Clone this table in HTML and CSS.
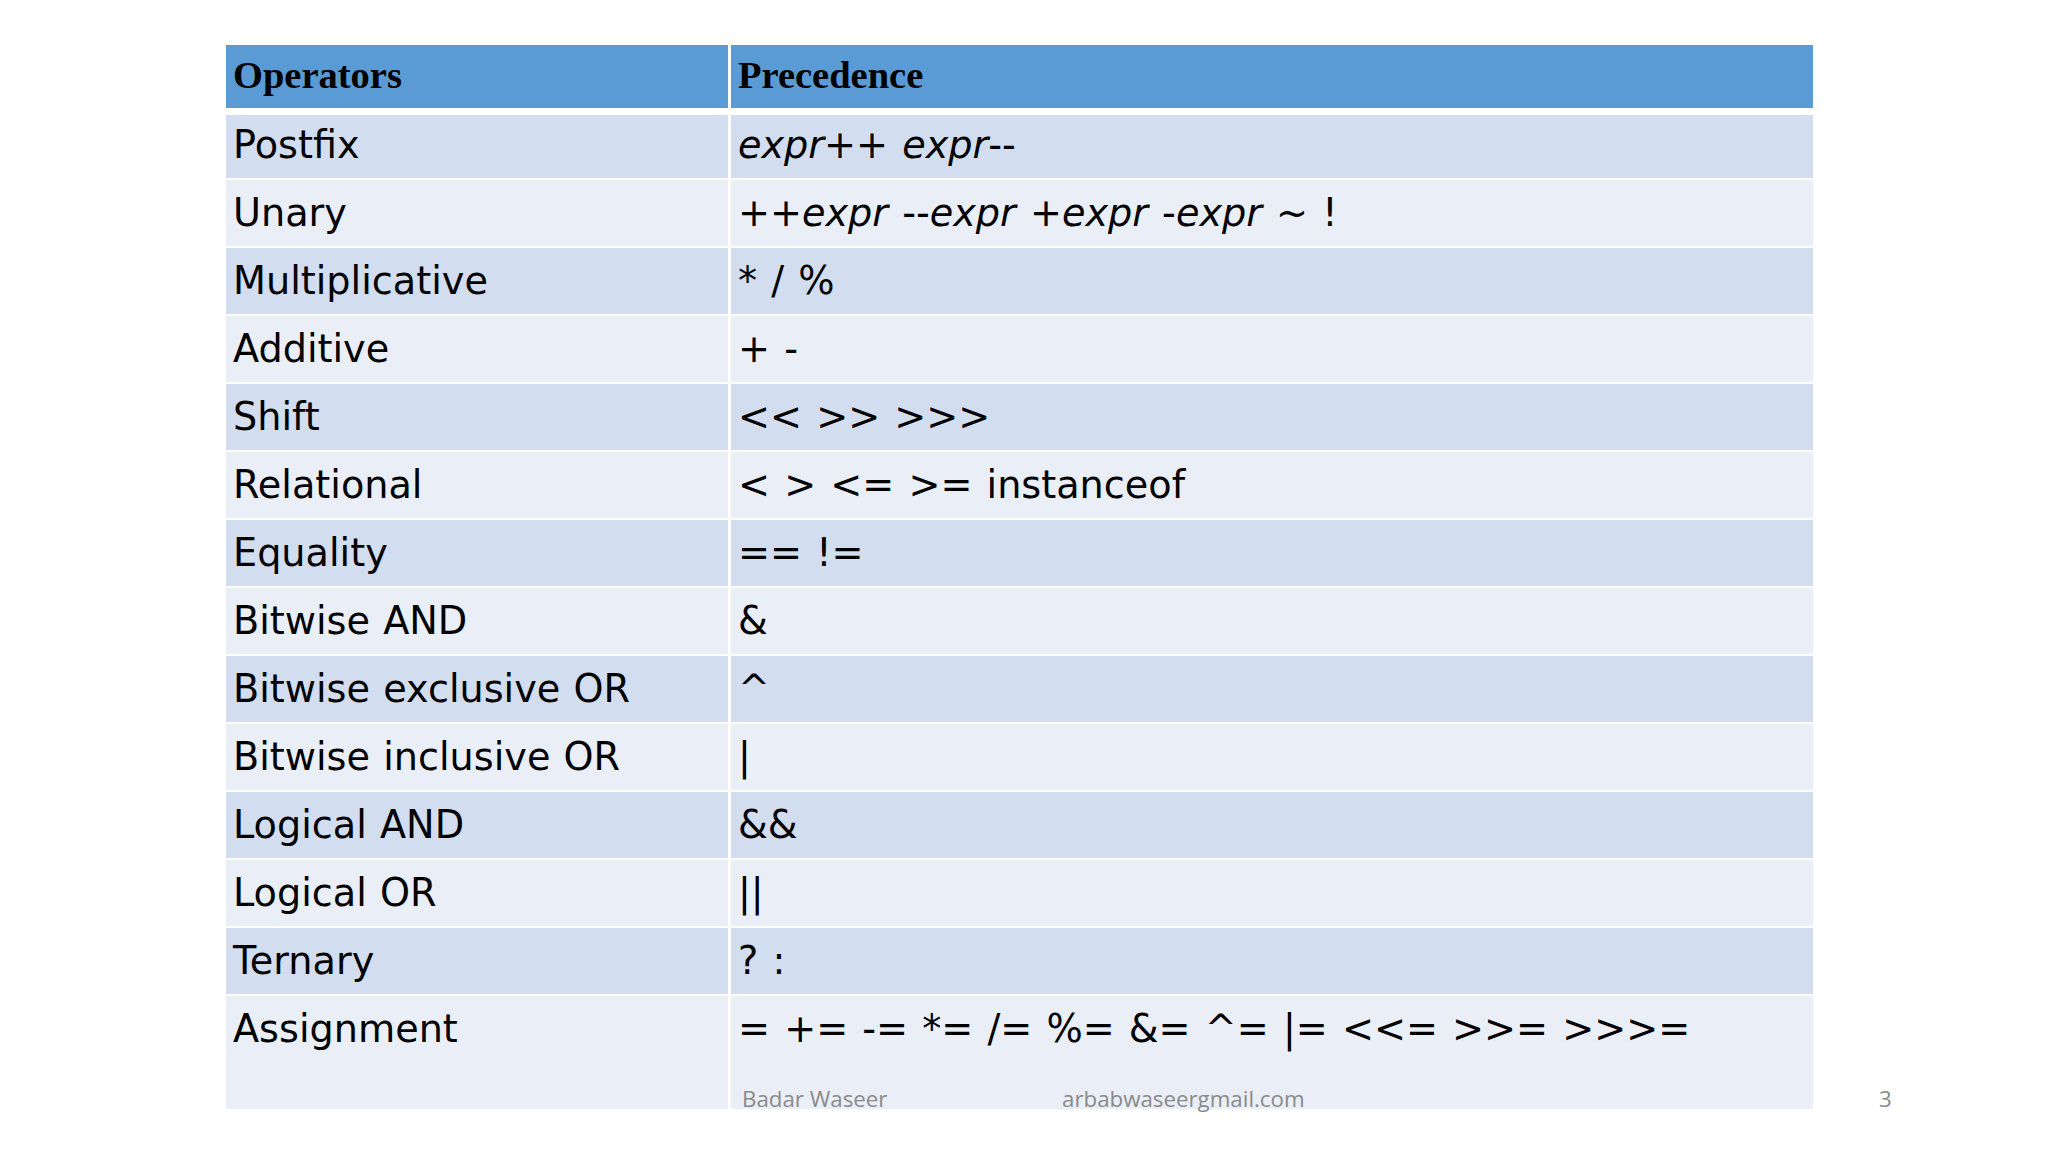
FILE: index.html
```html
<!DOCTYPE html>
<html>
<head>
<meta charset="utf-8">
<link rel="stylesheet" href="styles.css">
</head>
<body>
<div class="slide">
  <div class="table">
    <div class="row head">
      <div class="cell">Operators</div>
      <div class="cell">Precedence</div>
    </div>
    <div class="row dark first">
      <div class="cell">Postfix</div>
      <div class="cell op"><i>expr</i>++ <i>expr</i>--</div>
    </div>
    <div class="row light">
      <div class="cell">Unary</div>
      <div class="cell op">++<i>expr</i> --<i>expr</i> +<i>expr</i> -<i>expr</i> ~ !</div>
    </div>
    <div class="row dark">
      <div class="cell">Multiplicative</div>
      <div class="cell op">* / %</div>
    </div>
    <div class="row light">
      <div class="cell">Additive</div>
      <div class="cell op">+ -</div>
    </div>
    <div class="row dark">
      <div class="cell">Shift</div>
      <div class="cell op">&lt;&lt; &gt;&gt; &gt;&gt;&gt;</div>
    </div>
    <div class="row light">
      <div class="cell">Relational</div>
      <div class="cell op">&lt; &gt; &lt;= &gt;= instanceof</div>
    </div>
    <div class="row dark">
      <div class="cell">Equality</div>
      <div class="cell op">== !=</div>
    </div>
    <div class="row light">
      <div class="cell">Bitwise AND</div>
      <div class="cell op">&amp;</div>
    </div>
    <div class="row dark">
      <div class="cell">Bitwise exclusive OR</div>
      <div class="cell op">^</div>
    </div>
    <div class="row light">
      <div class="cell">Bitwise inclusive OR</div>
      <div class="cell op">|</div>
    </div>
    <div class="row dark">
      <div class="cell">Logical AND</div>
      <div class="cell op">&amp;&amp;</div>
    </div>
    <div class="row light">
      <div class="cell">Logical OR</div>
      <div class="cell op">||</div>
    </div>
    <div class="row dark">
      <div class="cell">Ternary</div>
      <div class="cell op">? :</div>
    </div>
    <div class="row light last">
      <div class="cell">Assignment</div>
      <div class="cell op">= += -= *= /= %= &amp;= ^= |= &lt;&lt;= &gt;&gt;= &gt;&gt;&gt;=</div>
    </div>
  </div>
  <div class="footer">
    <span class="f-name">Badar Waseer</span>
    <span class="f-mail">arbabwaseergmail.com</span>
    <span class="f-num">3</span>
  </div>
</div>
</body>
</html>
```
FILE: styles.css
```css
html, body {
  margin: 0;
  padding: 0;
  background: #ffffff;
}

.slide {
  position: relative;
  width: 2048px;
  height: 1152px;
  padding: 45px 0 0 226px;
  box-sizing: border-box;
}

.table {
  display: flex;
  flex-direction: column;
  gap: 2px;
  width: 1587px;
}

.row {
  display: grid;
  grid-template-columns: 502px 1082px;
  column-gap: 3px;
  height: 66px;
}

.cell {
  box-sizing: border-box;
  padding: 11px 0 0 7px;
  font-family: "DejaVu Sans", Verdana, sans-serif;
  font-size: 38.2px;
  line-height: 44px;
  word-spacing: 1px;
  color: #000;
  white-space: nowrap;
}

.cell.op {
  word-spacing: 2px;
}

.row.head {
  height: 63px;
  margin-bottom: 5px;
}

.row.head .cell {
  background: #5b9bd5;
  font-family: "Liberation Serif", "Times New Roman", serif;
  font-weight: bold;
  font-size: 38.5px;
  padding-top: 8px;
}

.row.first {
  height: 63px;
}

.row.first .cell {
  padding-top: 8px;
}

.row.dark .cell {
  background: #d2deef;
}

.row.light .cell {
  background: #eaeff7;
}

.row.last {
  height: 113px;
}

.footer {
  position: absolute;
  left: 0;
  top: 1084px;
  width: 2048px;
  height: 30px;
  font-family: "Open Sans", "Liberation Sans", sans-serif;
  font-size: 22.3px;
  line-height: 30px;
  color: #8a8a8a;
}

.footer span {
  position: absolute;
  top: 0;
}

.f-name { left: 742px; }
.f-mail { left: 1062px; }
.f-num { left: 1879px; }
```
